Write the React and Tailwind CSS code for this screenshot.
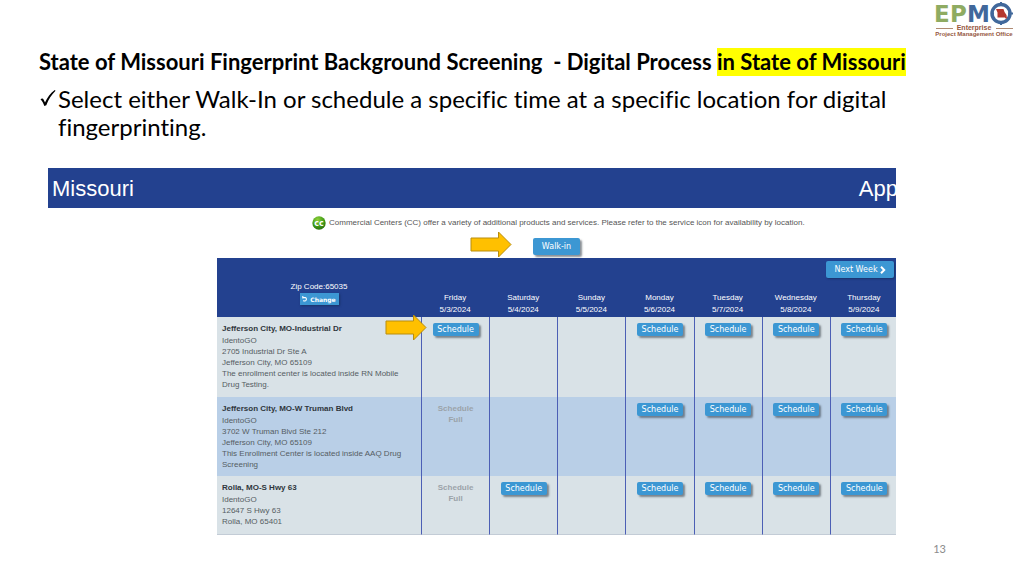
import React from "react";

const days = [
  ["Friday", "5/3/2024"],
  ["Saturday", "5/4/2024"],
  ["Sunday", "5/5/2024"],
  ["Monday", "5/6/2024"],
  ["Tuesday", "5/7/2024"],
  ["Wednesday", "5/8/2024"],
  ["Thursday", "5/9/2024"],
];

const centers = [
  {
    name: "Jefferson City, MO-Industrial Dr",
    lines: [
      "IdentoGO",
      "2705 Industrial Dr Ste A",
      "Jefferson City, MO 65109",
      "The enrollment center is located inside RN Mobile Drug Testing.",
    ],
    slots: ["open", "", "", "open", "open", "open", "open"],
    row: "h-20 bg-[#d9e2e7]",
    edge: "",
    highlighted: true,
  },
  {
    name: "Jefferson City, MO-W Truman Blvd",
    lines: [
      "IdentoGO",
      "3702 W Truman Blvd Ste 212",
      "Jefferson City, MO 65109",
      "This Enrollment Center is located inside AAQ Drug Screening",
    ],
    slots: ["full", "", "", "open", "open", "open", "open"],
    row: "h-[79px] bg-[#b9cfe7]",
    edge: "",
  },
  {
    name: "Rolla, MO-S Hwy 63",
    lines: ["IdentoGO", "12647 S Hwy 63", "Rolla, MO 65401"],
    slots: ["full", "open", "", "open", "open", "open", "open"],
    row: "h-[59px] bg-[#d9e2e7]",
    edge: "border-b border-b-[#c3ccd6]",
  },
];

function Arrow({ className }) {
  return (
    <svg className={className} width="42" height="27" viewBox="0 0 42 27" aria-hidden="true">
      <path d="M1 7H28.500V1L41 13.500L28.500 26V20H1Z" fill="#ffc000" stroke="#b98d0c" strokeWidth="1" />
    </svg>
  );
}

function Logo() {
  return (
    <svg width="82" height="42" viewBox="0 0 82 42" role="img" aria-label="EPMO Enterprise Project Management Office">
      <g fontFamily="DejaVu Sans, sans-serif" fontWeight="bold" fontSize="23">
        <text x="0" y="22" fill="#8fab62">E</text>
        <text x="16" y="22" fill="#8fab62">P</text>
        <text x="33" y="22" fill="#41689b">M</text>
      </g>
      <circle cx="67" cy="13.500" r="9" fill="#fff" stroke="#41689b" strokeWidth="3.500" />
      <path d="M67 2V6M67 21V25M57 13.500H60M74 13.500H79" stroke="#41689b" strokeWidth="2" />
      <path d="M62 9H69.500L70.500 12L72.500 15L73 18.500H71.500L71 17.500H63.500V12.500Z" fill="#b5382f" />
      <path d="M2 28.500H19M62 28.500H79" stroke="#b08a72" strokeWidth="1" />
      <g fontFamily="Liberation Sans, sans-serif" fontWeight="bold" textAnchor="middle" fill="#96583f">
        <text x="40" y="30" fontSize="7">Enterprise</text>
        <text x="40" y="36" fontSize="6">Project Management Office</text>
      </g>
    </svg>
  );
}

function ScheduleButton() {
  return (
    <button
      type="button"
      className="block h-[13px] w-[46px] rounded-[2px] bg-[#3c97d3] text-center font-['DejaVu_Sans',sans-serif] text-[8px] leading-[13px] text-white shadow-[2px_2px_2px_rgba(60,70,80,0.6)]"
    >
      Schedule
    </button>
  );
}

function Slot({ state }) {
  if (state === "open") return <ScheduleButton />;
  if (state === "full")
    return (
      <p className="text-center text-[8px] leading-[11px] font-bold text-[#9ba3a9]">
        Schedule
        <br />
        Full
      </p>
    );
  return null;
}

export default function App() {
  return (
    <main className="flex min-h-screen flex-col bg-white font-['Lato',sans-serif] text-black">
      <div className="flex h-[46px] justify-end pr-2">
        <Logo />
      </div>

      <header className="pr-24 pl-[39px] [font-variant-ligatures:none]">
        <h1 className="text-[22px] leading-[32px] font-bold whitespace-pre">
          State of Missouri Fingerprint Background Screening  - Digital Process{" "}
          <mark className="inline-block bg-[#ffff00] leading-[28px] text-black">in State of Missouri</mark>
        </h1>
        <ul className="mt-[7px]">
          <li className="flex text-[24px] leading-[28px]">
            <svg className="mt-1 mr-0.5 shrink-0" width="17" height="20" viewBox="0 0 17 20" aria-hidden="true">
              <path d="M1.500 10.500C2.500 9.300 4 9.200 4.700 10.800L6 13.600C8.200 8.500 11.500 4 15.800 1L16.500 1.800C12.500 5.800 9.500 10.500 7.300 16.200L5.300 17C4.600 14.600 3.400 12 1.500 10.500Z" fill="#000" />
            </svg>
            <span className="whitespace-nowrap">
              Select either Walk-In or schedule a specific time at a specific location for digital
              <br />
              fingerprinting.
            </span>
          </li>
        </ul>
      </header>

      <section className="mt-[27px] mr-32 ml-12 overflow-hidden font-['Liberation_Sans',sans-serif]">
        <div className="flex h-10 items-center justify-between bg-[#23418f] pl-1 text-[22px] text-white">
          <h2>Missouri</h2>
          <span className="-mr-0.5">App</span>
        </div>

        <div className="ml-[169px]">
          <div className="flex h-[30px] items-center pl-[95px] text-[8px] text-[#555]">
            <svg className="mr-[3px] shrink-0" width="14" height="14" viewBox="0 0 14 14" aria-hidden="true">
              <defs>
                <radialGradient id="cc" cx="0.4" cy="0.25" r="0.8">
                  <stop offset="0" stopColor="#8fd13a" />
                  <stop offset="0.6" stopColor="#3f9a16" />
                  <stop offset="1" stopColor="#2a6d0d" />
                </radialGradient>
              </defs>
              <circle cx="7" cy="7" r="6.700" fill="url(#cc)" />
              <text x="7" y="9.500" textAnchor="middle" fontFamily="DejaVu Sans, sans-serif" fontWeight="bold" fontSize="8" fill="#fff">cc</text>
            </svg>
            <p className="whitespace-nowrap">
              Commercial Centers (CC) offer a variety of additional products and services. Please refer to the service icon for availability by location.
            </p>
          </div>

          <div className="flex h-5 justify-center">
            <div className="relative">
              <Arrow className="absolute top-[-7px] left-[-63px]" />
              <button
                type="button"
                className="block h-[17px] w-[47px] rounded-[2px] bg-[#3c97d3] font-['DejaVu_Sans',sans-serif] text-[8px] leading-[17px] text-white shadow-[2px_2px_2px_rgba(60,70,80,0.6)]"
              >
                Walk-in
              </button>
            </div>
          </div>

          <div className="-mr-0.5">
            <table className="w-full table-fixed border-separate border-spacing-0 text-[8px]">
              <colgroup>
                <col className="w-[204px]" />
                {days.map(([day]) => (
                  <col key={day} />
                ))}
              </colgroup>
              <thead className="bg-[#23418f] text-white">
                <tr className="h-6">
                  <td colSpan={8} className="p-0 pr-1 pb-1 align-bottom">
                    <button
                      type="button"
                      className="ml-auto flex h-[17px] w-[68px] items-center justify-center gap-0.5 rounded-[2px] bg-[#3c97d3] font-['DejaVu_Sans',sans-serif] text-[8px] shadow-[1px_1px_2px_rgba(20,40,80,0.6)]"
                    >
                      Next Week
                      <svg width="6" height="8" viewBox="0 0 6 8" aria-hidden="true">
                        <path d="M1 0.800L4.200 4L1 7.200" fill="none" stroke="#fff" strokeWidth="2" />
                      </svg>
                    </button>
                  </td>
                </tr>
                <tr className="h-[35px]">
                  <th scope="col" className="p-0 align-top font-normal">
                    <div className="flex flex-col items-center">
                      <span className="leading-[10px]">Zip Code:65035</span>
                      <button
                        type="button"
                        className="mt-px flex h-3 w-[39px] items-center justify-center gap-0.5 bg-[#3c97d3] font-['DejaVu_Sans',sans-serif] text-[6px] font-bold shadow-[1px_1px_2px_rgba(20,40,80,0.6)]"
                      >
                        <svg width="6" height="6" viewBox="0 0 6 6" aria-hidden="true">
                          <path d="M1 1.600H3.300A1.800 1.800 0 1 1 1.300 4.500M0.800 0V2.400" fill="none" stroke="#fff" strokeWidth="1.100" />
                        </svg>
                        Change
                      </button>
                    </div>
                  </th>
                  {days.map(([day, date]) => (
                    <th key={day} scope="col" className="p-0 pb-px align-bottom leading-3 font-normal">
                      {day}
                      <br />
                      {date}
                    </th>
                  ))}
                </tr>
              </thead>
              <tbody>
                {centers.map((c) => (
                  <tr key={c.name} className={c.row}>
                    <th scope="row" className={`p-0 pt-1.5 pr-4 pl-[5px] text-left align-top leading-[11px] font-normal text-[#555d63] ${c.edge}`}>
                      <strong className="block leading-3 text-[#2f363c]">{c.name}</strong>
                      {c.lines.map((line) => (
                        <span key={line} className="block">
                          {line}
                        </span>
                      ))}
                    </th>
                    {c.slots.map((state, i) => (
                      <td key={days[i][0]} className={`border-l border-l-[#4c5fb5] p-0 pt-1.5 align-top ${c.edge}`}>
                        <div className="relative flex justify-center">
                          {c.highlighted && i === 0 && <Arrow className="absolute top-[-9px] left-[-37px]" />}
                          <Slot state={state} />
                        </div>
                      </td>
                    ))}
                  </tr>
                ))}
              </tbody>
            </table>
          </div>
        </div>
      </section>

      <footer className="mt-[7px] flex justify-end pr-[78px] text-[11px] leading-[14px] text-[#8b8b8b]">13</footer>
    </main>
  );
}
